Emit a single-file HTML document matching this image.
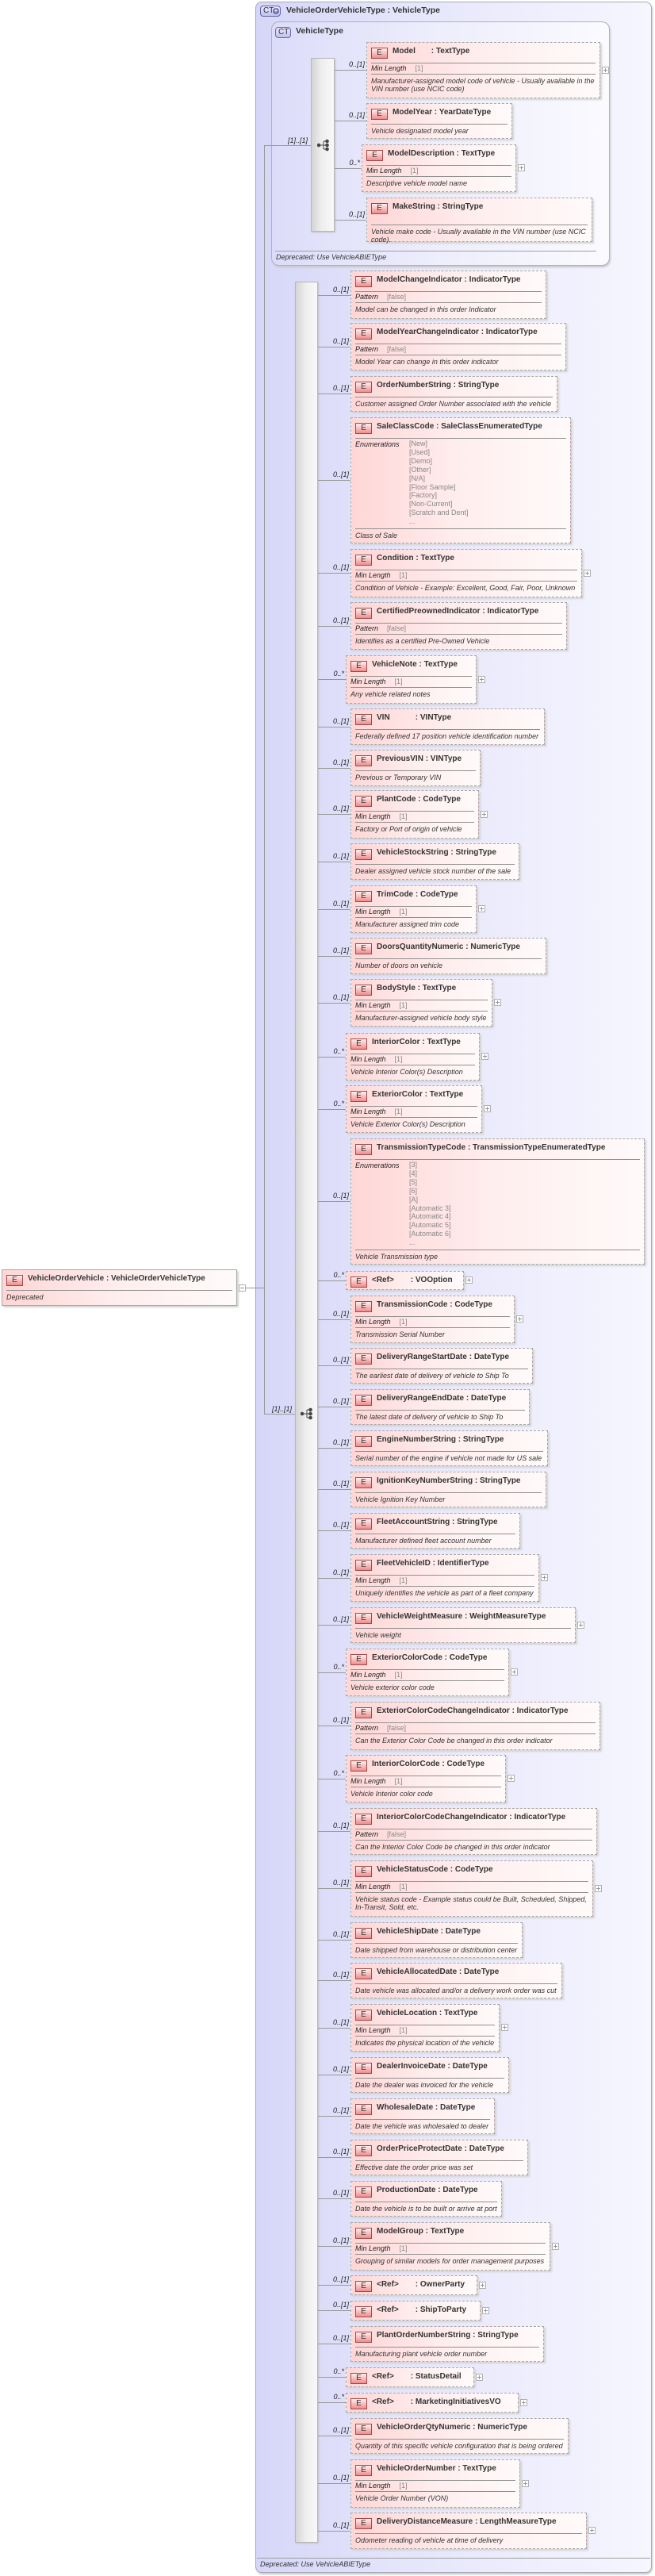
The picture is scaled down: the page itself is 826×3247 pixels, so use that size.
<!DOCTYPE html>
<html><head><meta charset="utf-8"><style>
*{margin:0;padding:0}
body{width:826px;height:3247px;position:relative;background:#fff;font-family:"Liberation Sans",Arial,sans-serif;overflow:hidden}
.o{position:absolute;box-sizing:border-box;border:1px solid #a8a8b8;border-radius:8px;background:linear-gradient(to right,#d6d6f8,#e6e6fb 40%,#f6f6ff);box-shadow:1px 2px 2px #c8c8c8}
.in{position:absolute;box-sizing:border-box;border:1px solid #b0b0c0;border-radius:10px;background:linear-gradient(to right,#dcdcfa,#eeeefc 50%,#fafaff);box-shadow:1px 2px 2px #c8c8c8}
.ct{position:absolute;box-sizing:border-box;border:1px solid #6868a0;border-radius:4px;background:linear-gradient(#e8e8ff,#c0c0ec);font:10px/12px "Liberation Sans",sans-serif;color:#333;padding-left:3px}
.ht{position:absolute;font:bold 10.5px/14px "Liberation Sans",sans-serif;color:#333;white-space:nowrap}
.ft{position:absolute;font:italic 9px/12px "Liberation Sans",sans-serif;color:#333;white-space:nowrap}
.hl{position:absolute;height:1px;background:#999}
.vl{position:absolute;width:1px;background:#999}
.sq{position:absolute;box-sizing:border-box;border:1px solid #b8b8b8;background:linear-gradient(to right,#d4d4d4,#eeeeee 45%,#f8f8f8);box-shadow:1px 1px 2px #c0c0c0}
.b{position:absolute;box-sizing:border-box;border:1px dashed #a8a8a8;background:linear-gradient(to right,#ffd6d6,#ffeeee 50%,#fffafa);box-shadow:2px 2px 2px #d4d4d4;padding-top:25px}
.m{border-style:solid}
.E{position:absolute;left:5px;top:6px;width:21px;height:14px;box-sizing:border-box;border:1px solid #a04848;background:linear-gradient(#fff0f0,#f08c8c);font:normal 10px/12px "Liberation Sans",sans-serif;text-align:center;color:#333}
.t{position:absolute;left:32px;top:3px;font:bold 10px/16px "Liberation Sans",sans-serif;white-space:nowrap;color:#333}
.n{display:inline-block;min-width:46px}
.r{margin:0 5px;border-top:1px solid #909090;font:9px/13px "Liberation Sans",sans-serif;white-space:nowrap}
.k{display:inline-block;padding-right:11px;font-style:italic;color:#222}
.v{color:#888}
.en .k{width:68px;padding:0;vertical-align:top}
.en{padding:1px 0 2px}
.ev{display:inline-block;line-height:10.9px;color:#888}
.d{margin:0 5px;border-top:1px solid #909090;font:italic 9px/10px "Liberation Sans",sans-serif;color:#333;padding:3px 0 2px;white-space:nowrap}
.p{position:absolute;right:-12px;top:calc(50% - 5px);width:9px;height:9px;box-sizing:border-box;border:1px solid #b0b0b0;background:#fff}
.p:before{content:"";position:absolute;left:1px;top:3px;width:5px;height:1px;background:#999}
.p:after{content:"";position:absolute;left:3px;top:1px;width:1px;height:5px;background:#999}
.c{position:absolute;width:38px;text-align:right;font:italic 9px/12px "Liberation Sans",sans-serif;color:#222}
.ic{position:absolute}
</style></head><body>

<div class="o" style="left:322px;top:2px;width:500px;height:3241px"></div>
<div class="ct" style="left:328px;top:7px;width:26px;height:14px">CT<span style="position:absolute;right:1px;top:2px;width:8px;height:8px;border-radius:50%;background:#7070b0;color:#fff;font:bold 8px/8px sans-serif;text-align:center">+</span></div>
<div class="ht" style="left:361px;top:6px">VehicleOrderVehicleType : VehicleType</div>
<div class="hl" style="left:324px;top:3224px;width:496px;background:#a0a0a0"></div>
<div class="ft" style="left:328px;top:3226px">Deprecated: Use VehicleABIEType</div>

<div class="in" style="left:342px;top:27px;width:427px;height:308px"></div>
<div class="ct" style="left:347px;top:34px;width:20px;height:14px">CT</div>
<div class="ht" style="left:373px;top:32px">VehicleType</div>
<div class="hl" style="left:347px;top:316px;width:405px;background:#a0a0a0"></div>
<div class="ft" style="left:348px;top:318px">Deprecated: Use VehicleABIEType</div>

<div class="b m" style="left:2px;top:1600px;width:297px;height:46px"><i class="E">E</i><div class="t">VehicleOrderVehicle : VehicleOrderVehicleType</div><div class="d">Deprecated</div></div>
<div style="position:absolute;left:301px;top:1619px;width:9px;height:9px;box-sizing:border-box;border:1px solid #b0b0b0;background:#fff"><div style="position:absolute;left:1px;top:3px;width:5px;height:1px;background:#999"></div></div>
<div class="hl" style="left:310px;top:1623px;width:23px"></div>
<div class="vl" style="left:333px;top:183px;height:1600px"></div>
<div class="hl" style="left:333px;top:183px;width:59px"></div>
<div class="c" style="left:350px;top:171px">[1]..[1]</div>
<div class="hl" style="left:333px;top:1782px;width:39px"></div>
<div class="c" style="left:330px;top:1770px">[1]..[1]</div>

<div class="sq" style="left:392px;top:73px;width:30px;height:219px"></div>
<svg class="ic" style="left:400px;top:175px" width="16" height="16" viewBox="0 0 16 16"><g stroke="#444" fill="#444"><line x1="2" y1="8" x2="8" y2="8"/><line x1="8" y1="3" x2="8" y2="13"/><line x1="8" y1="3" x2="12" y2="3"/><line x1="8" y1="8" x2="12" y2="8"/><line x1="8" y1="13" x2="12" y2="13"/><circle cx="2" cy="8" r="1.8"/><circle cx="12.5" cy="3" r="1.8"/><circle cx="12.5" cy="8" r="1.8"/><circle cx="12.5" cy="13" r="1.8"/></g></svg>
<div class="sq" style="left:372px;top:355px;width:29px;height:2850px"></div>
<svg class="ic" style="left:379px;top:1774px" width="16" height="16" viewBox="0 0 16 16"><g stroke="#444" fill="#444"><line x1="2" y1="8" x2="8" y2="8"/><line x1="8" y1="3" x2="8" y2="13"/><line x1="8" y1="3" x2="12" y2="3"/><line x1="8" y1="8" x2="12" y2="8"/><line x1="8" y1="13" x2="12" y2="13"/><circle cx="2" cy="8" r="1.8"/><circle cx="12.5" cy="3" r="1.8"/><circle cx="12.5" cy="8" r="1.8"/><circle cx="12.5" cy="13" r="1.8"/></g></svg>

<div class="hl" style="left:422px;top:88px;width:40px"></div><div class="c" style="left:422px;top:75px">0..[1]</div>
<div class="b" style="left:462px;top:53px;width:295px;height:71px"><i class="E">E</i><div class="t"><span class="n">Model</span> : TextType</div><div class="r"><span class="k">Min Length</span><span class="v">[1]</span></div><div class="d">Manufacturer-assigned model code of vehicle - Usually available in the<br>VIN number (use NCIC code)</div><div class="p"></div></div>
<div class="hl" style="left:422px;top:152px;width:40px"></div><div class="c" style="left:422px;top:139px">0..[1]</div>
<div class="b" style="left:462px;top:130px;width:184px;height:45px"><i class="E">E</i><div class="t">ModelYear : YearDateType</div><div class="d">Vehicle designated model year</div></div>
<div class="hl" style="left:422px;top:212px;width:34px"></div><div class="c" style="left:416px;top:199px">0..*</div>
<div class="b" style="left:456px;top:182px;width:195px;height:60px"><i class="E">E</i><div class="t">ModelDescription : TextType</div><div class="r"><span class="k">Min Length</span><span class="v">[1]</span></div><div class="d">Descriptive vehicle model name</div><div class="p"></div></div>
<div class="hl" style="left:422px;top:277px;width:40px"></div><div class="c" style="left:422px;top:264px">0..[1]</div>
<div class="b" style="left:462px;top:249px;width:285px;height:56px"><i class="E">E</i><div class="t">MakeString : StringType</div><div class="d" style="margin-top:8px">Vehicle make code - Usually available in the VIN number (use NCIC<br>code).</div></div>

<div class="hl" style="left:401px;top:372px;width:41px"></div><div class="c" style="left:402px;top:359px">0..[1]</div>
<div class="b" style="left:442px;top:341px;width:247px;height:61px"><i class="E">E</i><div class="t">ModelChangeIndicator : IndicatorType</div><div class="r"><span class="k">Pattern</span><span class="v">[false]</span></div><div class="d">Model can be changed in this order Indicator</div></div>

<div class="hl" style="left:401px;top:437px;width:41px"></div><div class="c" style="left:402px;top:424px">0..[1]</div>
<div class="b" style="left:442px;top:407px;width:272px;height:60px"><i class="E">E</i><div class="t">ModelYearChangeIndicator : IndicatorType</div><div class="r"><span class="k">Pattern</span><span class="v">[false]</span></div><div class="d">Model Year can change in this order indicator</div></div>

<div class="hl" style="left:401px;top:496px;width:41px"></div><div class="c" style="left:402px;top:483px">0..[1]</div>
<div class="b" style="left:442px;top:474px;width:261px;height:45px"><i class="E">E</i><div class="t">OrderNumberString : StringType</div><div class="d">Customer assigned Order Number associated with the vehicle</div></div>

<div class="hl" style="left:401px;top:605px;width:41px"></div><div class="c" style="left:402px;top:592px">0..[1]</div>
<div class="b" style="left:442px;top:526px;width:278px;height:159px"><i class="E">E</i><div class="t">SaleClassCode : SaleClassEnumeratedType</div><div class="r en"><span class="k">Enumerations</span><span class="ev">[New]<br>[Used]<br>[Demo]<br>[Other]<br>[N/A]<br>[Floor Sample]<br>[Factory]<br>[Non-Current]<br>[Scratch and Dent]<br>...</span></div><div class="d">Class of Sale</div></div>

<div class="hl" style="left:401px;top:722px;width:41px"></div><div class="c" style="left:402px;top:709px">0..[1]</div>
<div class="b" style="left:442px;top:692px;width:292px;height:61px"><i class="E">E</i><div class="t">Condition : TextType</div><div class="r"><span class="k">Min Length</span><span class="v">[1]</span></div><div class="d">Condition of Vehicle - Example: Excellent, Good, Fair, Poor, Unknown</div><div class="p"></div></div>

<div class="hl" style="left:401px;top:789px;width:41px"></div><div class="c" style="left:402px;top:776px">0..[1]</div>
<div class="b" style="left:442px;top:759px;width:273px;height:60px"><i class="E">E</i><div class="t">CertifiedPreownedIndicator : IndicatorType</div><div class="r"><span class="k">Pattern</span><span class="v">[false]</span></div><div class="d">Identifies as a certified Pre-Owned Vehicle</div></div>

<div class="hl" style="left:401px;top:856px;width:35px"></div><div class="c" style="left:396px;top:843px">0..*</div>
<div class="b" style="left:436px;top:826px;width:165px;height:61px"><i class="E">E</i><div class="t">VehicleNote : TextType</div><div class="r"><span class="k">Min Length</span><span class="v">[1]</span></div><div class="d">Any vehicle related notes</div><div class="p"></div></div>

<div class="hl" style="left:401px;top:916px;width:41px"></div><div class="c" style="left:402px;top:903px">0..[1]</div>
<div class="b" style="left:442px;top:893px;width:245px;height:46px"><i class="E">E</i><div class="t"><span class="n">VIN</span> : VINType</div><div class="d">Federally defined 17 position vehicle identification number</div></div>

<div class="hl" style="left:401px;top:968px;width:41px"></div><div class="c" style="left:402px;top:955px">0..[1]</div>
<div class="b" style="left:442px;top:945px;width:164px;height:46px"><i class="E">E</i><div class="t">PreviousVIN : VINType</div><div class="d">Previous or Temporary VIN</div></div>

<div class="hl" style="left:401px;top:1026px;width:41px"></div><div class="c" style="left:402px;top:1013px">0..[1]</div>
<div class="b" style="left:442px;top:996px;width:162px;height:61px"><i class="E">E</i><div class="t">PlantCode : CodeType</div><div class="r"><span class="k">Min Length</span><span class="v">[1]</span></div><div class="d">Factory or Port of origin of vehicle</div><div class="p"></div></div>

<div class="hl" style="left:401px;top:1086px;width:41px"></div><div class="c" style="left:402px;top:1073px">0..[1]</div>
<div class="b" style="left:442px;top:1063px;width:213px;height:46px"><i class="E">E</i><div class="t">VehicleStockString : StringType</div><div class="d">Dealer assigned vehicle stock number of the sale</div></div>

<div class="hl" style="left:401px;top:1146px;width:41px"></div><div class="c" style="left:402px;top:1133px">0..[1]</div>
<div class="b" style="left:442px;top:1116px;width:159px;height:60px"><i class="E">E</i><div class="t">TrimCode : CodeType</div><div class="r"><span class="k">Min Length</span><span class="v">[1]</span></div><div class="d">Manufacturer assigned trim code</div><div class="p"></div></div>

<div class="hl" style="left:401px;top:1205px;width:41px"></div><div class="c" style="left:402px;top:1192px">0..[1]</div>
<div class="b" style="left:442px;top:1182px;width:247px;height:46px"><i class="E">E</i><div class="t">DoorsQuantityNumeric : NumericType</div><div class="d">Number of doors on vehicle</div></div>

<div class="hl" style="left:401px;top:1264px;width:41px"></div><div class="c" style="left:402px;top:1251px">0..[1]</div>
<div class="b" style="left:442px;top:1234px;width:179px;height:60px"><i class="E">E</i><div class="t">BodyStyle : TextType</div><div class="r"><span class="k">Min Length</span><span class="v">[1]</span></div><div class="d">Manufacturer-assigned vehicle body style</div><div class="p"></div></div>

<div class="hl" style="left:401px;top:1332px;width:35px"></div><div class="c" style="left:396px;top:1319px">0..*</div>
<div class="b" style="left:436px;top:1302px;width:169px;height:60px"><i class="E">E</i><div class="t">InteriorColor : TextType</div><div class="r"><span class="k">Min Length</span><span class="v">[1]</span></div><div class="d">Vehicle Interior Color(s) Description</div><div class="p"></div></div>

<div class="hl" style="left:401px;top:1398px;width:35px"></div><div class="c" style="left:396px;top:1385px">0..*</div>
<div class="b" style="left:436px;top:1368px;width:172px;height:60px"><i class="E">E</i><div class="t">ExteriorColor : TextType</div><div class="r"><span class="k">Min Length</span><span class="v">[1]</span></div><div class="d">Vehicle Exterior Color(s) Description</div><div class="p"></div></div>

<div class="hl" style="left:401px;top:1514px;width:41px"></div><div class="c" style="left:402px;top:1501px">0..[1]</div>
<div class="b" style="left:442px;top:1435px;width:371px;height:159px"><i class="E">E</i><div class="t">TransmissionTypeCode : TransmissionTypeEnumeratedType</div><div class="r en"><span class="k">Enumerations</span><span class="ev">[3]<br>[4]<br>[5]<br>[6]<br>[A]<br>[Automatic 3]<br>[Automatic 4]<br>[Automatic 5]<br>[Automatic 6]<br>...</span></div><div class="d">Vehicle Transmission type</div></div>

<div class="hl" style="left:401px;top:1614px;width:35px"></div><div class="c" style="left:396px;top:1601px">0..*</div>
<div class="b" style="left:436px;top:1602px;width:149px;height:24px;padding:0"><i class="E">E</i><div class="t"><span class="n">&lt;Ref&gt;</span> : VOOption</div><div class="p"></div></div>

<div class="hl" style="left:401px;top:1663px;width:41px"></div><div class="c" style="left:402px;top:1650px">0..[1]</div>
<div class="b" style="left:442px;top:1633px;width:207px;height:60px"><i class="E">E</i><div class="t">TransmissionCode : CodeType</div><div class="r"><span class="k">Min Length</span><span class="v">[1]</span></div><div class="d">Transmission Serial Number</div><div class="p"></div></div>

<div class="hl" style="left:401px;top:1721px;width:41px"></div><div class="c" style="left:402px;top:1708px">0..[1]</div>
<div class="b" style="left:442px;top:1699px;width:230px;height:45px"><i class="E">E</i><div class="t">DeliveryRangeStartDate : DateType</div><div class="d">The earliest date of delivery of vehicle to Ship To</div></div>

<div class="hl" style="left:401px;top:1773px;width:41px"></div><div class="c" style="left:402px;top:1760px">0..[1]</div>
<div class="b" style="left:442px;top:1751px;width:226px;height:45px"><i class="E">E</i><div class="t">DeliveryRangeEndDate : DateType</div><div class="d">The latest date of delivery of vehicle to Ship To</div></div>

<div class="hl" style="left:401px;top:1825px;width:41px"></div><div class="c" style="left:402px;top:1812px">0..[1]</div>
<div class="b" style="left:442px;top:1803px;width:249px;height:45px"><i class="E">E</i><div class="t">EngineNumberString : StringType</div><div class="d">Serial number of the engine if vehicle not made for US sale</div></div>

<div class="hl" style="left:401px;top:1877px;width:41px"></div><div class="c" style="left:402px;top:1864px">0..[1]</div>
<div class="b" style="left:442px;top:1855px;width:247px;height:45px"><i class="E">E</i><div class="t">IgnitionKeyNumberString : StringType</div><div class="d">Vehicle Ignition Key Number</div></div>

<div class="hl" style="left:401px;top:1929px;width:41px"></div><div class="c" style="left:402px;top:1916px">0..[1]</div>
<div class="b" style="left:442px;top:1907px;width:214px;height:45px"><i class="E">E</i><div class="t">FleetAccountString : StringType</div><div class="d">Manufacturer defined fleet account number</div></div>

<div class="hl" style="left:401px;top:1989px;width:41px"></div><div class="c" style="left:402px;top:1976px">0..[1]</div>
<div class="b" style="left:442px;top:1959px;width:238px;height:60px"><i class="E">E</i><div class="t">FleetVehicleID : IdentifierType</div><div class="r"><span class="k">Min Length</span><span class="v">[1]</span></div><div class="d">Uniquely identifies the vehicle as part of a fleet company</div><div class="p"></div></div>

<div class="hl" style="left:401px;top:2048px;width:41px"></div><div class="c" style="left:402px;top:2035px">0..[1]</div>
<div class="b" style="left:442px;top:2026px;width:284px;height:45px"><i class="E">E</i><div class="t">VehicleWeightMeasure : WeightMeasureType</div><div class="d">Vehicle weight</div><div class="p"></div></div>

<div class="hl" style="left:401px;top:2108px;width:35px"></div><div class="c" style="left:396px;top:2095px">0..*</div>
<div class="b" style="left:436px;top:2078px;width:206px;height:60px"><i class="E">E</i><div class="t">ExteriorColorCode : CodeType</div><div class="r"><span class="k">Min Length</span><span class="v">[1]</span></div><div class="d">Vehicle exterior color code</div><div class="p"></div></div>

<div class="hl" style="left:401px;top:2175px;width:41px"></div><div class="c" style="left:402px;top:2162px">0..[1]</div>
<div class="b" style="left:442px;top:2145px;width:315px;height:61px"><i class="E">E</i><div class="t">ExteriorColorCodeChangeIndicator : IndicatorType</div><div class="r"><span class="k">Pattern</span><span class="v">[false]</span></div><div class="d">Can the Exterior Color Code be changed in this order indicator</div></div>

<div class="hl" style="left:401px;top:2242px;width:35px"></div><div class="c" style="left:396px;top:2229px">0..*</div>
<div class="b" style="left:436px;top:2212px;width:202px;height:60px"><i class="E">E</i><div class="t">InteriorColorCode : CodeType</div><div class="r"><span class="k">Min Length</span><span class="v">[1]</span></div><div class="d">Vehicle Interior color code</div><div class="p"></div></div>

<div class="hl" style="left:401px;top:2308px;width:41px"></div><div class="c" style="left:402px;top:2295px">0..[1]</div>
<div class="b" style="left:442px;top:2279px;width:311px;height:59px"><i class="E">E</i><div class="t">InteriorColorCodeChangeIndicator : IndicatorType</div><div class="r"><span class="k">Pattern</span><span class="v">[false]</span></div><div class="d">Can the Interior Color Code be changed in this order indicator</div></div>

<div class="hl" style="left:401px;top:2380px;width:41px"></div><div class="c" style="left:402px;top:2367px">0..[1]</div>
<div class="b" style="left:442px;top:2345px;width:306px;height:71px"><i class="E">E</i><div class="t">VehicleStatusCode : CodeType</div><div class="r"><span class="k">Min Length</span><span class="v">[1]</span></div><div class="d">Vehicle status code - Example status could be Built, Scheduled, Shipped,<br>In-Transit, Sold, etc.</div><div class="p"></div></div>

<div class="hl" style="left:401px;top:2445px;width:41px"></div><div class="c" style="left:402px;top:2432px">0..[1]</div>
<div class="b" style="left:442px;top:2423px;width:217px;height:45px"><i class="E">E</i><div class="t">VehicleShipDate : DateType</div><div class="d">Date shipped from warehouse or distribution center</div></div>

<div class="hl" style="left:401px;top:2496px;width:41px"></div><div class="c" style="left:402px;top:2483px">0..[1]</div>
<div class="b" style="left:442px;top:2474px;width:267px;height:45px"><i class="E">E</i><div class="t">VehicleAllocatedDate : DateType</div><div class="d">Date vehicle was allocated and/or a delivery work order was cut</div></div>

<div class="hl" style="left:401px;top:2556px;width:41px"></div><div class="c" style="left:402px;top:2543px">0..[1]</div>
<div class="b" style="left:442px;top:2526px;width:188px;height:60px"><i class="E">E</i><div class="t">VehicleLocation : TextType</div><div class="r"><span class="k">Min Length</span><span class="v">[1]</span></div><div class="d">Indicates the physical location of the vehicle</div><div class="p"></div></div>

<div class="hl" style="left:401px;top:2615px;width:41px"></div><div class="c" style="left:402px;top:2602px">0..[1]</div>
<div class="b" style="left:442px;top:2593px;width:200px;height:45px"><i class="E">E</i><div class="t">DealerInvoiceDate : DateType</div><div class="d">Date the dealer was invoiced for the vehicle</div></div>

<div class="hl" style="left:401px;top:2667px;width:41px"></div><div class="c" style="left:402px;top:2654px">0..[1]</div>
<div class="b" style="left:442px;top:2645px;width:182px;height:45px"><i class="E">E</i><div class="t">WholesaleDate : DateType</div><div class="d">Date the vehicle was wholesaled to dealer</div></div>

<div class="hl" style="left:401px;top:2719px;width:41px"></div><div class="c" style="left:402px;top:2706px">0..[1]</div>
<div class="b" style="left:442px;top:2697px;width:224px;height:45px"><i class="E">E</i><div class="t">OrderPriceProtectDate : DateType</div><div class="d">Effective date the order price was set</div></div>

<div class="hl" style="left:401px;top:2771px;width:41px"></div><div class="c" style="left:402px;top:2758px">0..[1]</div>
<div class="b" style="left:442px;top:2749px;width:191px;height:45px"><i class="E">E</i><div class="t">ProductionDate : DateType</div><div class="d">Date the vehicle is to be built or arrive at port</div></div>

<div class="hl" style="left:401px;top:2831px;width:41px"></div><div class="c" style="left:402px;top:2818px">0..[1]</div>
<div class="b" style="left:442px;top:2801px;width:252px;height:61px"><i class="E">E</i><div class="t">ModelGroup : TextType</div><div class="r"><span class="k">Min Length</span><span class="v">[1]</span></div><div class="d">Grouping of similar models for order management purposes</div><div class="p"></div></div>

<div class="hl" style="left:401px;top:2880px;width:41px"></div><div class="c" style="left:402px;top:2867px">0..[1]</div>
<div class="b" style="left:442px;top:2868px;width:160px;height:25px;padding:0"><i class="E">E</i><div class="t"><span class="n">&lt;Ref&gt;</span> : OwnerParty</div><div class="p"></div></div>

<div class="hl" style="left:401px;top:2912px;width:41px"></div><div class="c" style="left:402px;top:2899px">0..[1]</div>
<div class="b" style="left:442px;top:2900px;width:164px;height:25px;padding:0"><i class="E">E</i><div class="t"><span class="n">&lt;Ref&gt;</span> : ShipToParty</div><div class="p"></div></div>

<div class="hl" style="left:401px;top:2954px;width:41px"></div><div class="c" style="left:402px;top:2941px">0..[1]</div>
<div class="b" style="left:442px;top:2932px;width:244px;height:45px"><i class="E">E</i><div class="t">PlantOrderNumberString : StringType</div><div class="d">Manufacturing plant vehicle order number</div></div>

<div class="hl" style="left:401px;top:2996px;width:35px"></div><div class="c" style="left:396px;top:2983px">0..*</div>
<div class="b" style="left:436px;top:2984px;width:162px;height:25px;padding:0"><i class="E">E</i><div class="t"><span class="n">&lt;Ref&gt;</span> : StatusDetail</div><div class="p"></div></div>

<div class="hl" style="left:401px;top:3028px;width:35px"></div><div class="c" style="left:396px;top:3015px">0..*</div>
<div class="b" style="left:436px;top:3016px;width:218px;height:25px;padding:0"><i class="E">E</i><div class="t"><span class="n">&lt;Ref&gt;</span> : MarketingInitiativesVO</div><div class="p"></div></div>

<div class="hl" style="left:401px;top:3070px;width:41px"></div><div class="c" style="left:402px;top:3057px">0..[1]</div>
<div class="b" style="left:442px;top:3048px;width:275px;height:45px"><i class="E">E</i><div class="t">VehicleOrderQtyNumeric : NumericType</div><div class="d">Quantity of this specific vehicle configuration that is being ordered</div></div>

<div class="hl" style="left:401px;top:3130px;width:41px"></div><div class="c" style="left:402px;top:3117px">0..[1]</div>
<div class="b" style="left:442px;top:3100px;width:214px;height:61px"><i class="E">E</i><div class="t">VehicleOrderNumber : TextType</div><div class="r"><span class="k">Min Length</span><span class="v">[1]</span></div><div class="d">Vehicle Order Number (VON)</div><div class="p"></div></div>

<div class="hl" style="left:401px;top:3190px;width:41px"></div><div class="c" style="left:402px;top:3177px">0..[1]</div>
<div class="b" style="left:442px;top:3167px;width:298px;height:46px"><i class="E">E</i><div class="t">DeliveryDistanceMeasure : LengthMeasureType</div><div class="d">Odometer reading of vehicle at time of delivery</div><div class="p"></div></div>

</body></html>
